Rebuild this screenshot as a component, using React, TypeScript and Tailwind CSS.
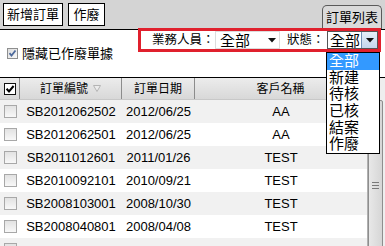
const FONT = "font-['Liberation_Sans','Noto_Sans_CJK_TC',sans-serif]";

const ROWS: [string, string, string][] = [
  ['SB2012062502', '2012/06/25', 'AA'],
  ['SB2012062501', '2012/06/25', 'AA'],
  ['SB2011012601', '2011/01/26', 'TEST'],
  ['SB2010092101', '2010/09/21', 'TEST'],
  ['SB2008103001', '2008/10/30', 'TEST'],
  ['SB2008040801', '2008/04/08', 'TEST'],
];

const STATUS = ['全部', '新建', '待核', '已核', '結案', '作廢'];

function DownArrow() {
  return (
    <svg width="8" height="5" viewBox="0 0 8 5">
      <path d="M0 0H8L4 4.5Z" fill="#111" />
    </svg>
  );
}

function RowCheck() {
  return <span className="block w-[13px] h-[13px] border border-[#a8a8a8] bg-linear-to-b from-[#e2e2e2] to-[#f8f8f8]" />;
}

export default function App() {
  return (
    <div className={`${FONT} relative w-[385px] h-[246px] overflow-hidden bg-white text-black`}>
      {/* toolbar */}
      <div className="h-[30px] bg-[#d4d4d4] border-b border-black flex justify-between pl-[3px] pr-[3px]">
        <div className="flex gap-[5px] pt-[3px]">
          <button className="w-[60px] h-[23px] border border-black bg-white text-[13px] leading-none">新增訂單</button>
          <button className="w-[37px] h-[23px] border border-black bg-white text-[13px] leading-none">作廢</button>
        </div>
        <div className="self-end w-[60px] h-[24px] border border-b-0 border-[#5a5a5a] rounded-t-[5px] bg-[#dadada] flex items-center justify-center text-[13px]">
          訂單列表
        </div>
      </div>

      {/* filters */}
      <div className="relative h-[49px] mt-[-2px] flex justify-between items-start pr-[4px]">
        <label className="flex items-center gap-[4px] pl-[7px] mt-[19px] text-[13px] leading-none">
          <svg width="11" height="11" viewBox="0 0 11 11">
            <defs>
              <linearGradient id="cb" x1="0" y1="0" x2="1" y2="1">
                <stop offset="0" stopColor="#dcdcdc" />
                <stop offset="1" stopColor="#fafafa" />
              </linearGradient>
            </defs>
            <rect x="0.5" y="0.5" width="10" height="10" fill="url(#cb)" stroke="#8e8f8f" />
            <path d="M2.5 5.2L4.5 7.5L8.5 2.5" fill="none" stroke="#4d6a9c" strokeWidth="1.8" />
          </svg>
          隱藏已作廢單據
        </label>
        <div className="w-[243px] h-[24px] border-[3px] border-[#e0202d] bg-white flex items-center pl-[11px] text-[12.5px] whitespace-nowrap">
          <span className="w-[63px] shrink-0 leading-none">業務人員：</span>
          <div className="w-[65px] shrink-0 h-[18px] border border-[#dcdcdc] flex items-center justify-between pl-[4px] pr-[3px]">
            <span className="text-[15px] leading-none">全部</span>
            <DownArrow />
          </div>
          <span className="ml-[7px] w-[40px] shrink-0 leading-none">狀態：</span>
          <div className="w-[51px] shrink-0 h-[18px] border border-[#555] flex items-center">
            <span className="flex-1 pl-[2px] text-[15px] leading-none">全部</span>
            <span className="w-[16px] h-full border-l border-[#6f8fb5] bg-linear-to-b from-[#e6eef8] to-[#c4d6ec] flex items-center justify-center">
              <DownArrow />
            </span>
          </div>
        </div>
      </div>

      {/* table */}
      <div className="flex border-t border-black">
        <div className="w-[367px]">
          <div className="h-[22px] grid grid-cols-[20px_102px_73px_172px] bg-linear-to-b from-[#ececec] to-[#d8d8d8] border-b border-[#c8c8c8] text-[12px]">
            <div className="border-r border-[#8c8c8c] flex items-center justify-center">
              <svg width="12" height="12" viewBox="0 0 12 12">
                <rect x="0.5" y="0.5" width="11" height="11" fill="#fff" stroke="#111" />
                <path d="M2.6 5.8L5 8.4L9.6 3" fill="none" stroke="#000" strokeWidth="2" />
              </svg>
            </div>
            <div className="border-r border-[#8c8c8c] flex items-center justify-center gap-[5px]">
              訂單編號
              <svg width="8" height="7" viewBox="0 0 8 7">
                <path d="M0.5 0.5H7.5L4 6.5Z" fill="#ececec" stroke="#b4b4b4" />
              </svg>
            </div>
            <div className="border-r border-[#8c8c8c] flex items-center justify-center">訂單日期</div>
            <div className="border-r border-[#8c8c8c] flex items-center justify-center">客戶名稱</div>
          </div>
          {ROWS.map(([no, date, name], i) => (
            <div
              key={no}
              className={`h-[23px] grid grid-cols-[20px_102px_73px_172px] items-center text-[13px] ${i % 2 === 0 ? 'bg-[#f1f1f1]' : 'bg-white'}`}
            >
              <div className="flex justify-center"><RowCheck /></div>
              <div className="text-center">{no}</div>
              <div className="text-center">{date}</div>
              <div className="text-center">{name}</div>
            </div>
          ))}
          <div className="h-[23px] bg-[#f1f1f1] pl-[4px] pt-[5px]"><RowCheck /></div>
        </div>
        <div className="w-[18px] bg-[#eeeeee] border-l border-[#b0b0b0] pt-[22px] pr-[2px]">
          <div className="h-[170px] border border-[#8e8e8e] rounded-[2px] bg-linear-to-r from-[#e8e8e8] to-[#d6d6d6] flex flex-col items-center justify-center gap-[2px]">
            <span className="w-[7px] h-px bg-[#7a7a7a]" />
            <span className="w-[7px] h-px bg-[#7a7a7a]" />
            <span className="w-[7px] h-px bg-[#7a7a7a]" />
          </div>
        </div>
      </div>

      {/* open status dropdown */}
      <ul className="absolute left-[326px] top-[52px] w-[54px] border border-black bg-white text-[15px]">
        {STATUS.map((s, i) => (
          <li
            key={s}
            className={`h-[16.7px] leading-[16.7px] pl-[2px] ${i === 0 ? 'bg-[#3399ff] text-white' : ''}`}
          >
            {s}
          </li>
        ))}
      </ul>
    </div>
  );
}
